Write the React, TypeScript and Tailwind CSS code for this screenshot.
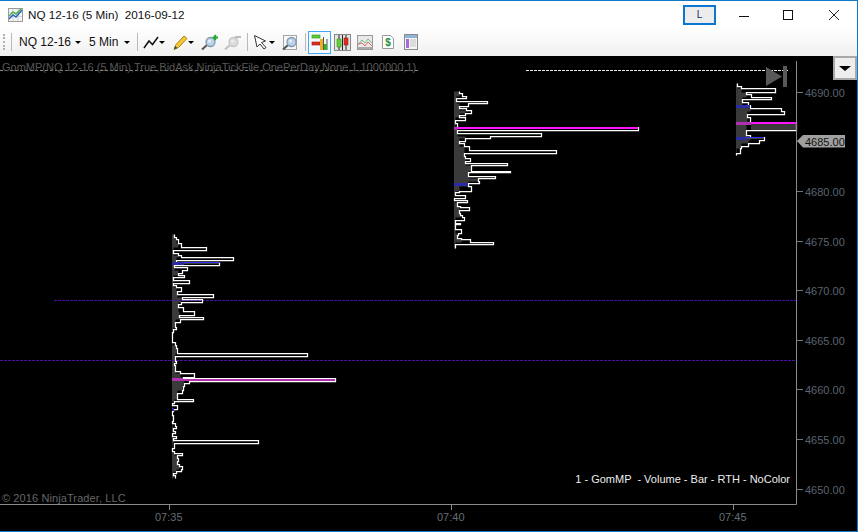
import React from "react";

type Row = [number, number];

function profile(ox: number, oy: number, base: number, y0: number, rows: Row[]) {
  const px = (z: number) => Math.floor(ox + z / 3) + 0.5;
  const py = (z: number) => Math.round(oy + z / 3) + 0.5;
  let d = `M${px(rows[0][1])} ${py(y0)}`;
  let g = `M${base} ${py(y0)}`;
  rows.forEach(([end, x], i) => {
    d += ` H${px(x)} V${py(end)}`;
    const a = rows[i - 1]?.[1] ?? x;
    const b = rows[i + 1]?.[1] ?? x;
    const m = Math.min(a, x, b);
    g += ` H${px(m)} V${py(end)}`;
  });
  g += ` H${base} Z`;
  return { d, g };
}

const p1 = profile(160, 230, 172, 12, [
  [20, 44], [28, 50], [40, 55], [50, 65], [60, 140], [70, 40], [75, 55], [82, 65], [90, 221], [96, 50],
  [104, 179], [112, 43], [120, 83], [128, 68], [134, 55], [142, 74], [150, 40], [158, 89], [165, 40], [172, 48],
  [182, 65], [192, 52], [200, 161], [208, 67], [215, 128], [222, 65], [230, 55], [244, 71], [254, 104], [260, 58],
  [268, 131], [275, 60], [292, 46], [298, 50], [305, 40], [318, 38], [335, 37], [345, 45], [355, 50], [369, 52],
  [378, 443], [394, 46], [399, 48], [404, 42], [411, 46], [423, 45], [430, 62], [440, 104], [445, 70], [454, 527],
  [460, 88], [468, 74], [480, 70], [488, 68], [506, 52], [514, 101], [520, 42], [526, 38], [536, 53], [542, 40],
  [556, 37], [572, 41], [580, 38], [588, 46], [594, 50], [602, 40], [610, 47], [618, 37], [624, 50], [630, 40],
  [640, 296], [655, 44], [662, 37], [670, 44], [676, 68], [685, 52], [692, 56], [702, 52], [707, 59], [716, 68],
  [722, 64], [728, 49], [736, 40], [744, 47],
]);

const p2 = profile(440, 85, 454, 18, [
  [24, 58], [33, 68], [40, 80], [47, 48], [55, 143], [62, 85], [70, 58], [76, 80], [85, 95], [90, 76],
  [97, 58], [105, 76], [115, 46], [127, 52], [136, 595], [145, 52], [152, 305], [160, 150], [167, 76], [175, 58],
  [182, 73], [195, 88], [205, 350], [212, 73], [220, 76], [227, 92], [233, 76], [241, 203], [257, 94], [262, 212],
  [272, 85], [278, 167], [288, 115], [293, 119], [303, 85], [317, 95], [322, 58], [331, 46], [338, 76], [346, 43],
  [352, 83], [362, 52], [367, 62], [376, 88], [385, 58], [390, 62], [397, 66], [406, 73], [413, 46], [418, 62],
  [433, 46], [443, 65], [450, 55], [458, 52], [463, 64], [472, 91], [478, 160], [488, 46],
]);

const p3 = profile(640, 0, 736, 250, [
  [258, 292], [265, 304], [275, 407], [282, 318], [290, 334], [296, 395], [305, 307], [315, 326], [325, 330], [332, 424],
  [342, 434], [350, 322], [367, 332], [391, 468], [405, 318], [412, 332], [420, 373], [430, 358], [437, 325], [445, 305],
  [458, 302], [466, 290],
]);

const prices = [
  ["4690.00", 93], ["4680.00", 192], ["4675.00", 242], ["4670.00", 291], ["4665.00", 341],
  ["4660.00", 390], ["4655.00", 440], ["4650.00", 490],
] as const;
const times = [["07:35", 169], ["07:40", 451], ["07:45", 733]] as const;

function Caret() {
  return <span className="block w-0 h-0 border-x-[3px] border-x-transparent border-t-[3px] border-t-black" />;
}
function Sep() {
  return <span className="block w-px h-[18px] bg-[#b9b9b9]" />;
}

function AppIcon() {
  return (
    <svg width="15" height="14" viewBox="0 0 15 14">
      <rect x="0.5" y="0.5" width="14" height="13" fill="#f4f4f4" stroke="#9a9a9a" />
      <path d="M1 4.5H14M1 8.5H14M5 1V13M10 1V13" stroke="#d5d5d5" />
      <path d="M1 11L5 7L8 9L14 2" stroke="#2c62c9" strokeWidth="1.5" fill="none" />
      <path d="M1 8L5 4L8 6L13 1" stroke="#4fb24a" strokeWidth="1.5" fill="none" />
    </svg>
  );
}

function Magnifier({ dim }: { dim?: boolean }) {
  return (
    <g>
      <path d="M1 15.5L6 11" stroke={dim ? "#c2c2c2" : "#5a5a5a"} strokeWidth="2.2" />
      <circle cx="9.5" cy="8" r="4.5" fill={dim ? "#dcdcdc" : "#bcd2e6"} stroke={dim ? "#c6c6c6" : "#8299b0"} strokeWidth="1.3" />
      <circle cx="8.5" cy="7" r="1.6" fill={dim ? "#eeeeee" : "#e6f0f8"} />
    </g>
  );
}

export default function App() {
  return (
    <div className="w-[858px] h-[532px] flex flex-col overflow-hidden bg-white border-t border-t-[#1279c6] border-r border-r-[#1279c6] border-b border-b-[#1279c6] font-['Liberation_Sans',Arial,sans-serif]">
      {/* title bar */}
      <div className="h-[27px] flex items-center shrink-0">
        <span className="ml-2 flex"><AppIcon /></span>
        <span className="ml-[5px] text-[11.7px] text-[#111] whitespace-pre">NQ 12-16 (5 Min)  2016-09-12</span>
        <div className="ml-auto flex items-center self-start">
          <div className="w-[33px] h-[20px] border-2 border-[#0a78d2] bg-[#ececec] flex items-center justify-center text-[10px] text-[#1a2a6c] pb-[2px]">L</div>
          <div className="w-[46px] h-[28px] ml-[3px]">
            <svg width="46" height="28" viewBox="0 0 46 28"><path d="M20 15.5H30" stroke="#111" /></svg>
          </div>
          <div className="w-[46px] h-[28px]">
            <svg width="46" height="28" viewBox="0 0 46 28"><rect x="18.5" y="9.5" width="9" height="9" fill="none" stroke="#111" /></svg>
          </div>
          <div className="w-[46px] h-[28px]">
            <svg width="46" height="28" viewBox="0 0 46 28"><path d="M18 9L28 19M28 9L18 19" stroke="#222" /></svg>
          </div>
        </div>
      </div>

      {/* toolbar */}
      <div className="h-[28px] flex items-center shrink-0 bg-gradient-to-b from-white to-[#f0f0f0] text-[12px] text-[#111]">
        <span className="ml-[3px] w-[2px] h-[16px] border-l-2 border-dotted border-[#b0b0b0]" />
        <span className="ml-[6px]"><Sep /></span>
        <span className="ml-[7px] w-[51px] whitespace-nowrap">NQ 12-16</span>
        <span className="ml-[5px]"><Caret /></span>
        <span className="ml-[8px] w-[30px] whitespace-nowrap">5 Min</span>
        <span className="ml-[5px]"><Caret /></span>
        <span className="ml-[7px]"><Sep /></span>
        <svg className="ml-[5px]" width="16" height="16" viewBox="0 0 16 16"><path d="M1 14L6 7L9.5 10.5L15 3" stroke="#111" strokeWidth="1.5" fill="none" /></svg>
        <span><Caret /></span>
        <svg className="ml-[7px]" width="16" height="17" viewBox="0 0 16 17"><path d="M4 10.5L12 2L15 4.5L6.5 13.5L2 15.5Z" fill="#f5c832" stroke="#a9831a" /><path d="M2 15.5L3 12L5.5 14Z" fill="#444" /></svg>
        <span><Caret /></span>
        <svg className="ml-[7px]" width="18" height="17" viewBox="0 0 18 17"><Magnifier /><path d="M11.5 3.5H17M14.2 0.7V6.3" stroke="#1fa830" strokeWidth="2" /></svg>
        <svg className="ml-[5px]" width="18" height="17" viewBox="0 0 18 17"><Magnifier dim /><path d="M11 3H17" stroke="#bdbdbd" strokeWidth="2" /></svg>
        <span className="ml-[5px]"><Sep /></span>
        <svg className="ml-[5px]" width="15" height="16" viewBox="0 0 15 16"><path d="M1.5 1.5L12.5 7L8.5 8.5L13 13.5L11 15L7 10L4 13Z" fill="#fff" stroke="#333" /></svg>
        <span className="ml-[1px]"><Caret /></span>
        <svg className="ml-[7px]" width="16" height="17" viewBox="0 0 16 17"><rect x="1.5" y="1.5" width="13" height="14" fill="#f8f8f8" stroke="#a5a5a5" /><Magnifier /></svg>
        <span className="ml-[7px]"><Sep /></span>
        <div className="ml-[2px] w-[23px] h-[23px] border border-[#42a5f5] bg-[#f4f9fd] flex items-center justify-center">
          <svg width="17" height="18" viewBox="0 0 17 18">
            <rect x="1" y="2" width="8" height="3" fill="#55d030" stroke="#3a8a20" strokeWidth="0.6" />
            <rect x="1" y="9" width="8" height="3" fill="#e03020" stroke="#901810" strokeWidth="0.6" />
            <path d="M12.5 4V17M16 6V17" stroke="#555" />
            <rect x="9" y="6" width="3" height="11" fill="#e8b020" />
            <rect x="13" y="11" width="3" height="6" fill="#38b030" />
          </svg>
        </div>
        <svg className="ml-[3px]" width="17" height="17" viewBox="0 0 17 17">
          <rect x="0.5" y="0.5" width="16" height="16" fill="#e4e4e4" stroke="#888" />
          <path d="M5 1V16M12 1V16M8.5 1V16" stroke="#222" />
          <rect x="3" y="5" width="4" height="8" fill="#62d630" stroke="#2c7a18" strokeWidth="0.5" />
          <rect x="10" y="4" width="4" height="7" fill="#e22c20" stroke="#8a1510" strokeWidth="0.5" />
        </svg>
        <svg className="ml-[6px]" width="16" height="15" viewBox="0 0 16 15">
          <rect x="0.5" y="0.5" width="15" height="14" fill="#e8e8e8" stroke="#9a9a9a" />
          <path d="M1 10L5 5L8 8L11 4L15 8" stroke="#6cbf7a" fill="none" />
          <path d="M1 9L5 8L8 11L11 7L15 11" stroke="#d86a6a" fill="none" />
          <rect x="1" y="12" width="14" height="2" fill="#aaa" />
        </svg>
        <svg className="ml-[9px]" width="12" height="14" viewBox="0 0 12 14">
          <path d="M0.5 0.5H8.5L11.5 3.5V13.5H0.5Z" fill="#fff" stroke="#999" />
          <text x="6" y="11" textAnchor="middle" fontSize="10" fontWeight="700" fill="#1c8a3a" fontFamily="Liberation Sans">$</text>
        </svg>
        <svg className="ml-[10px]" width="14" height="16" viewBox="0 0 14 16">
          <rect x="0.5" y="0.5" width="13" height="15" fill="#f3f3f3" stroke="#8a8a8a" />
          <rect x="1" y="1" width="12" height="3" fill="#8fb4d8" />
          <rect x="2" y="5" width="3" height="9" fill="#a86ad8" />
          <path d="M6 6H12M6 8H12M6 10H12M6 12H12" stroke="#c4c4c4" />
        </svg>
      </div>

      {/* chart */}
      <div className="relative flex-1 bg-black text-[11px] overflow-hidden">
        <svg className="absolute inset-0" width="858" height="476" viewBox="0 56 858 476">
          <g fill="#3a3a3a">
            <path d={p1.g} />
            <path d={p2.g} />
            <path d={p3.g} />
            <rect x="751" y="124" width="45" height="6" />
          </g>
          <path d="M54 300.5H796" stroke="#4c10a8" strokeDasharray="3 1" />
          <path d="M0 360.5H796" stroke="#4c10a8" strokeDasharray="3 1" />
          <path d="M0 70.5H420" stroke="#8a8a8a" strokeDasharray="3 2" />
          <path d="M526 70.5H788" stroke="#e8e8e8" strokeDasharray="3 1" />
          <g fill="none" stroke="#fff" strokeWidth="1.25">
            <path d={p1.d} />
            <path d={p2.d} />
            <path d={p3.d} />
          </g>
          {/* POC and value-area marks */}
          <rect x="172" y="379" width="163" height="2" fill="#b030b0" />
          <rect x="172" y="378" width="11" height="3" fill="#b030b0" />
          <rect x="454" y="127" width="3" height="3" fill="#b030b0" />
          <rect x="457" y="127" width="181" height="2" fill="#ff14ff" />
          <rect x="736" y="122" width="15" height="3" fill="#b030b0" />
          <rect x="751" y="122" width="45" height="2" fill="#ff14ff" />
          <rect x="172" y="262" width="12" height="3" fill="#2b2ba8" />
          <rect x="184" y="262" width="36" height="1" fill="#3030ff" />
          <rect x="454" y="183" width="14" height="3" fill="#2b2ba8" />
          <rect x="736" y="105" width="14" height="3" fill="#2b2ba8" />
          <rect x="736" y="137" width="10" height="3" fill="#2b2ba8" />
          <rect x="746" y="137" width="18" height="1" fill="#3030ff" />
          <rect x="172" y="408" width="2" height="3" fill="#2b2ba8" />
          {/* axes */}
          <path d="M796.5 61V504.5H0" fill="none" stroke="#8a8a8a" />
          {[93, 142, 192, 242, 291, 341, 390, 440, 490].map((y) => (
            <path key={y} d={`M797 ${y - 0.5}H803`} stroke="#777" />
          ))}
          {times.map(([t, x]) => (
            <path key={t} d={`M${x + 0.5} 505V510`} stroke="#8a8a8a" />
          ))}
          {/* jump-to-end glyph */}
          <path d="M766 67L782 76.5L766 86Z" fill="#595959" />
          <rect x="783" y="66" width="4" height="21" fill="#595959" />
          {/* last price tag */}
          <path d="M797 141L803 135H845V147.5H803Z" fill="#a0a0a0" />
        </svg>

        <div className="absolute left-[2px] top-[3px] text-[#585858] whitespace-pre">GomMP(NQ 12-16 (5 Min),True,BidAsk,NinjaTickFile,OnePerDay,None,1,1000000,1)</div>
        <div className="absolute left-[2px] top-[434px] text-[#666] whitespace-pre tracking-[0.1px]">© 2016 NinjaTrader, LLC</div>
        <div className="absolute right-[67px] top-[415px] text-[#eee] whitespace-pre">1 - GomMP  - Volume - Bar - RTH - NoColor</div>
        {prices.map(([p, y]) => (
          <div key={p} className="absolute left-[805px] text-[#5a6470] leading-[14px]" style={{ top: y - 63 }}>{p}</div>
        ))}
        <div className="absolute left-[805px] top-[79px] leading-[14px] text-[#111]">4685.00</div>
        {times.map(([t, x]) => (
          <div key={t} className="absolute text-[#666e76] leading-[14px]" style={{ left: x - 14, top: 454 }}>{t}</div>
        ))}
        <div className="absolute left-[833px] top-0 w-[24px] h-[24px] border-2 border-[#a8a8a8] bg-[#eee] flex items-center justify-center">
          <span className="w-0 h-0 border-x-[6px] border-x-transparent border-t-[5px] border-t-black" />
        </div>
      </div>
    </div>
  );
}
